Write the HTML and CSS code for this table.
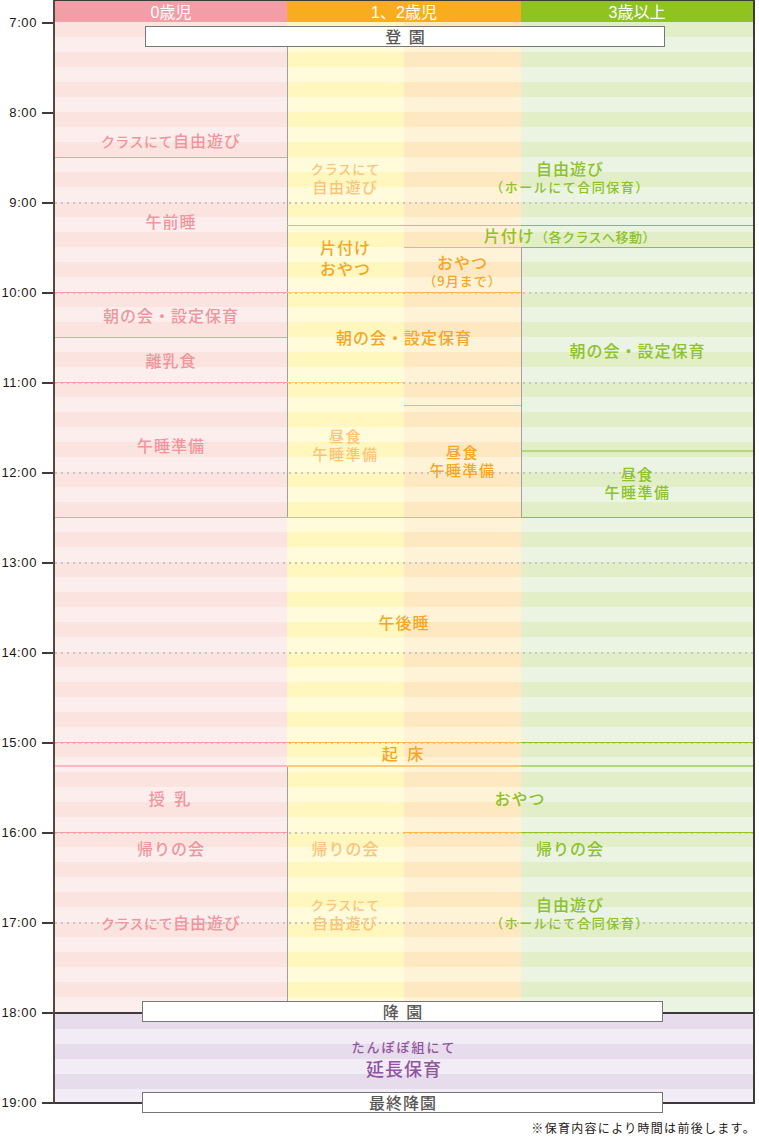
FILE: index.html
```html
<!DOCTYPE html>
<html lang="ja">
<head>
<meta charset="utf-8">
<title>デイリープログラム</title>
<link rel="stylesheet" href="styles.css">
</head>
<body>
<div class="page">
  <div class="timetable">
    <div class="axis">
      <div class="hour"><span>7:00</span><i></i></div>
      <div class="hour"><span>8:00</span><i></i></div>
      <div class="hour"><span>9:00</span><i></i></div>
      <div class="hour"><span>10:00</span><i></i></div>
      <div class="hour"><span>11:00</span><i></i></div>
      <div class="hour"><span>12:00</span><i></i></div>
      <div class="hour"><span>13:00</span><i></i></div>
      <div class="hour"><span>14:00</span><i></i></div>
      <div class="hour"><span>15:00</span><i></i></div>
      <div class="hour"><span>16:00</span><i></i></div>
      <div class="hour"><span>17:00</span><i></i></div>
      <div class="hour"><span>18:00</span><i></i></div>
      <div class="hour"><span>19:00</span><i></i></div>
    </div>
    <div class="chart">
      <div class="head">
        <div class="h h0">0歳児</div>
        <div class="h h1">1、2歳児</div>
        <div class="h h3">3歳以上</div>
      </div>
      <div class="grid">
        <div class="bg bg-pk"></div>
        <div class="bg bg-ye"></div>
        <div class="bg bg-or"></div>
        <div class="bg bg-gr"></div>

        <div class="dot d9"></div>
        <div class="dot d10"></div>
        <div class="dot d11"></div>
        <div class="dot d12"></div>
        <div class="dot d13"></div>
        <div class="dot d14"></div>
        <div class="dot d15"></div>
        <div class="dot d16"></div>
        <div class="dot d17"></div>

        <div class="vl vl1"></div>
        <div class="vl vl2"></div>

        <!-- 0歳児 -->
        <div class="c t-pk p1"><p><small>クラスにて</small>自由遊び</p></div>
        <div class="c t-pk p2"><p>午前睡</p></div>
        <div class="c t-pk p3"><p>朝の会・設定保育</p></div>
        <div class="c t-pk p4"><p>離乳食</p></div>
        <div class="c t-pk p5"><p>午睡準備</p></div>
        <div class="c t-pk p6"><p>授 乳</p></div>
        <div class="c t-pk p7"><p>帰りの会</p></div>
        <div class="c t-pk p8"><p><small>クラスにて</small>自由遊び</p></div>

        <!-- 全体 -->
        <div class="c t-or f1"><p>午後睡</p></div>
        <div class="c t-or f2"><p>起 床</p></div>

        <!-- 1、2歳児 -->
        <div class="c t-yf y1 two"><p><small>クラスにて</small></p><p>自由遊び</p></div>
        <div class="c t-or y2 two lh21"><p>片付け</p><p>おやつ</p></div>
        <div class="c t-or y3"><p>朝の会・設定保育</p></div>
        <div class="c t-yf y4 two"><p>昼食</p><p>午睡準備</p></div>
        <div class="c t-gr y5"><p>おやつ</p></div>
        <div class="c t-yf y6"><p>帰りの会</p></div>
        <div class="c t-yf y7 two"><p><small>クラスにて</small></p><p>自由遊び</p></div>

        <div class="c t-or o1 two"><p>おやつ</p><p><small>（9月まで）</small></p></div>
        <div class="c t-or o2 two"><p>昼食</p><p>午睡準備</p></div>

        <!-- 3歳以上 -->
        <div class="c t-gr g1 two"><p>自由遊び</p><p><small class="paren">（ホールにて合同保育）</small></p></div>
        <div class="c t-gr g2"><p>片付け<small class="paren2">（各クラスへ移動）</small></p></div>
        <div class="c t-gr g3"><p>朝の会・設定保育</p></div>
        <div class="c t-gr g4 two"><p>昼食</p><p>午睡準備</p></div>
        <div class="c t-gr g5"><p>帰りの会</p></div>
        <div class="c t-gr g6 two"><p>自由遊び</p><p><small class="paren">（ホールにて合同保育）</small></p></div>
      </div>
      <div class="ext">
        <p class="ext-s">たんぽぽ組にて</p>
        <p class="ext-l">延長保育</p>
      </div>
      <div class="box box-in">登 園</div>
      <div class="box box-out">降 園</div>
      <div class="box box-last">最終降園</div>
    </div>
  </div>
  <p class="note">※保育内容により時間は前後します。</p>
</div>
</body>
</html>
```

FILE: styles.css
```css
:root {
  --pk-d: #fbe3df; --pk-l: #fdeeee;
  --ye-d: #fff7bd; --ye-l: #fffbdb;
  --or-d: #fee8c1; --or-l: #fef3d6;
  --gr-d: #e2eec7; --gr-l: #ebf3e3;
  --pu-d: #e7dcec; --pu-l: #f1ecf5;
  --pk-line: #f29ea5; --or-line: #f8b84e; --gr-line: #8fc31f;
  --pk-line2: #f6b9bf; --or-line2: #fbcb7a; --gr-line2: #b4d77a;
  --frame: #3e3a39;
}

* { box-sizing: border-box; margin: 0; padding: 0; }

body {
  margin: 0;
  background: #fff;
  font-family: "Liberation Sans", "Noto Sans CJK JP", sans-serif;
  color: #231815;
}

.page { width: 759px; }

.timetable { display: flex; align-items: flex-start; }

/* time axis */
.axis {
  flex: none;
  width: 53px;
  padding-top: 15px;
  display: flex;
  flex-direction: column;
}
.hour {
  height: 90px;
  display: flex;
  justify-content: flex-end;
  align-items: flex-start;
}
.hour:last-child { height: 16px; }
.hour span {
  font-size: 13px;
  line-height: 16px;
  letter-spacing: 0.6px;
  margin-right: 5px;
}
.hour i {
  display: block;
  width: 11px;
  height: 2px;
  margin-top: 7px;
  background: var(--frame);
}

/* chart */
.chart {
  flex: none;
  position: relative;
  width: 702px;
  border-top: 1px solid var(--frame);
  border-left: 2px solid #574740;
  border-right: 2px solid var(--frame);
  border-bottom: 2px solid var(--frame);
  font-family: "Noto Sans CJK JP", "Liberation Sans", sans-serif;
  font-weight: 500;
}

.head {
  display: grid;
  grid-template-columns: 232px 234px 232px;
  height: 21px;
}
.h {
  color: #fff;
  font-size: 16px;
  line-height: 19px;
  padding-top: 2px;
  text-align: center;
  font-family: "Liberation Sans", "Noto Sans CJK JP", sans-serif;
  font-weight: 400;
}
.h0 { background: #f29ea6; }
.h1 { background: #f8ad1f; }
.h3 { background: #8fc31f; }

.grid {
  display: grid;
  grid-template-columns: 232px 117px 117px 232px;
  grid-template-rows: repeat(132, 7.5px);
}

.bg { grid-row: 1 / -1; }
.bg-pk { grid-column: 1; background: repeating-linear-gradient(to bottom, var(--pk-d) 0 15px, var(--pk-l) 15px 30px); }
.bg-ye { grid-column: 2; background: repeating-linear-gradient(to bottom, var(--ye-d) 0 15px, var(--ye-l) 15px 30px); }
.bg-or { grid-column: 3; background: repeating-linear-gradient(to bottom, var(--or-d) 0 15px, var(--or-l) 15px 30px); }
.bg-gr { grid-column: 4; background: repeating-linear-gradient(to bottom, var(--gr-d) 0 15px, var(--gr-l) 15px 30px); }

/* dotted hour lines */
.dot {
  grid-column: 1 / -1;
  align-self: start;
  height: 2px;
  background: repeating-linear-gradient(to right, #c6c6c6 0 2px, transparent 2px 6px);
}
.d9 { grid-row: 25; }
.d10 { grid-row: 37; }
.d11 { grid-row: 49; }
.d12 { grid-row: 61; }
.d13 { grid-row: 73; }
.d14 { grid-row: 85; }
.d15 { grid-row: 97; }
.d16 { grid-row: 109; }
.d17 { grid-row: 121; }

/* vertical dividers */
.vl { grid-column: 2; border-left: 1px solid #a0a0a0; }
.vl1 { grid-row: 4 / 67; }
.vl2 { grid-row: 100 / 133; }

/* cells */
.c {
  display: flex;
  flex-direction: column;
  align-items: center;
  justify-content: center;
  text-align: center;
  white-space: nowrap;
  background-repeat: no-repeat;
  background-position: top left;
  background-size: 100% 1px;
}
.c p {
  font-size: 16px;
  line-height: 20px;
  letter-spacing: 1px;
}
.c.two p {
  font-size: 15px;
  line-height: 18px;
  letter-spacing: 1.5px;
}
.c small {
  font-size: 14px;
  letter-spacing: 0.5px;
}
.c.two small { font-size: 13px; letter-spacing: 1px; }
.c small.paren { font-size: 13px; letter-spacing: 1.5px; }
.c small.paren2 { font-size: 13px; letter-spacing: 0.5px; }
.c.lh21 p { line-height: 21px; font-size: 16px; letter-spacing: 1px; }

.t-pk { color: #f0959e; }
.t-yf { color: #fbc47a; }
.t-or { color: #f5a624; }
.t-gr { color: #8cc22a; }

.p1 { grid-column: 1; grid-row: 1 / 19; justify-content: flex-end; padding-bottom: 6px; }
.p2 { grid-column: 1; grid-row: 19 / 37; padding-bottom: 7px; background-image: linear-gradient(var(--pk-line), var(--pk-line)); }
.p3 { grid-column: 1; grid-row: 37 / 43; background-image: linear-gradient(var(--pk-line), var(--pk-line)); }
.p4 { grid-column: 1; grid-row: 43 / 49; background-image: linear-gradient(var(--pk-line), var(--pk-line)); }
.p5 { grid-column: 1; grid-row: 49 / 67; padding-bottom: 9px; background-image: linear-gradient(var(--pk-line), var(--pk-line)); }
.p6 { grid-column: 1; grid-row: 100 / 109; background-image: linear-gradient(var(--pk-line2), var(--pk-line2)); background-size: 100% 2px; }
.p7 { grid-column: 1; grid-row: 109 / 115; padding-bottom: 13px; background-image: linear-gradient(var(--pk-line), var(--pk-line)); }
.p8 { grid-column: 1; grid-row: 115 / 127; }

.f1 {
  grid-column: 1 / 5; grid-row: 67 / 97; padding-bottom: 15px;
  background-image: linear-gradient(to right, var(--pk-line) 0 232px, var(--or-line) 232px 466px, var(--gr-line) 466px);
}
.f2 {
  grid-column: 1 / 5; grid-row: 97 / 100;
  background-image: linear-gradient(to right, var(--pk-line) 0 232px, var(--or-line) 232px 466px, var(--gr-line) 466px);
}
.f2 p, .p6 p { letter-spacing: 3px; }

.y1 { grid-column: 2; grid-row: 16 / 28; padding-bottom: 5px; }
.y2 { grid-column: 2; grid-row: 28 / 37; background-image: linear-gradient(var(--or-line), var(--or-line)); }
.y3 { grid-column: 2 / 4; grid-row: 37 / 49; background-image: linear-gradient(to right, var(--or-line2) 0 117px, var(--or-line) 117px); }
.y4 { grid-column: 2; grid-row: 49 / 67; padding-bottom: 9px; background-image: linear-gradient(var(--or-line2), var(--or-line2)); }
.y5 {
  grid-column: 2 / 5; grid-row: 100 / 109; background-size: 100% 2px;
  background-image: linear-gradient(to right, var(--or-line2) 0 234px, var(--gr-line2) 234px);
}
.y6 { grid-column: 2; grid-row: 109 / 115; padding-bottom: 13px; }
.y7 { grid-column: 2; grid-row: 115 / 127; padding-bottom: 18px; }

.o1 { grid-column: 3; grid-row: 31 / 37; padding-top: 3px; background-image: linear-gradient(var(--or-line), var(--or-line)); }
.o1 p:first-child { font-size: 16px; letter-spacing: 1px; }
.o1 small { font-size: 13px; letter-spacing: 0; }
.o2 { grid-column: 3; grid-row: 52 / 67; background-image: linear-gradient(var(--or-line), var(--or-line)); }

.g1 { grid-column: 3 / 5; grid-row: 16 / 28; padding-bottom: 5px; padding-right: 17px; }
.g1 p:first-child, .g6 p:first-child { font-size: 16px; letter-spacing: 1px; }
.g2 {
  grid-column: 3 / 5; grid-row: 28 / 31; padding-right: 17px;
  background-image: linear-gradient(to right, #c9c35a 0 117px, var(--gr-line) 117px);
}
.g3 {
  grid-column: 4; grid-row: 31 / 58; padding-top: 4px; border-left: 1px solid #a0a0a0;
  background-image: linear-gradient(var(--gr-line), var(--gr-line));
}
.g4 {
  grid-column: 4; grid-row: 58 / 67; border-left: 1px solid #a0a0a0;
  background-image: linear-gradient(var(--gr-line2), var(--gr-line2)); background-size: 100% 2px;
}
.g4 p { line-height: 19px; }
.g5 {
  grid-column: 3 / 5; grid-row: 109 / 115; padding-bottom: 13px; padding-right: 17px;
  background-image: linear-gradient(to right, var(--or-line) 0 117px, var(--gr-line) 117px);
}
.g6 { grid-column: 3 / 5; grid-row: 115 / 127; padding-bottom: 18px; padding-right: 17px; }

/* extended care */
.ext {
  height: 90px;
  border-top: 2px solid var(--frame);
  background: repeating-linear-gradient(to bottom, var(--pu-d) 0 15px, var(--pu-l) 15px 30px);
  display: flex;
  flex-direction: column;
  align-items: center;
  justify-content: center;
  color: #91559f;
  text-align: center;
}
.ext-s { font-size: 13px; line-height: 20px; letter-spacing: 2px; }
.ext-l { font-size: 18px; line-height: 22px; letter-spacing: 1px; }

/* arrival / departure boxes */
.box {
  position: absolute;
  height: 21px;
  background: #fff;
  border: 1px solid #777;
  color: #595757;
  font-size: 16px;
  line-height: 19px;
  text-align: center;
}
.box-in { top: 25px; left: 90px; width: 520px; padding-left: 2px; letter-spacing: 2px; }
.box-out { top: 1000px; left: 87px; width: 521px; padding-left: 2px; letter-spacing: 2px; }
.box-last { top: 1091px; left: 87px; width: 521px; letter-spacing: 1px; padding-left: 1px; }

.note {
  margin-top: 9px;
  padding-right: 3px;
  text-align: right;
  font-family: "Noto Sans CJK JP", sans-serif;
  font-size: 12px;
  line-height: 16px;
  letter-spacing: 1.3px;
  color: #231815;
}
```
